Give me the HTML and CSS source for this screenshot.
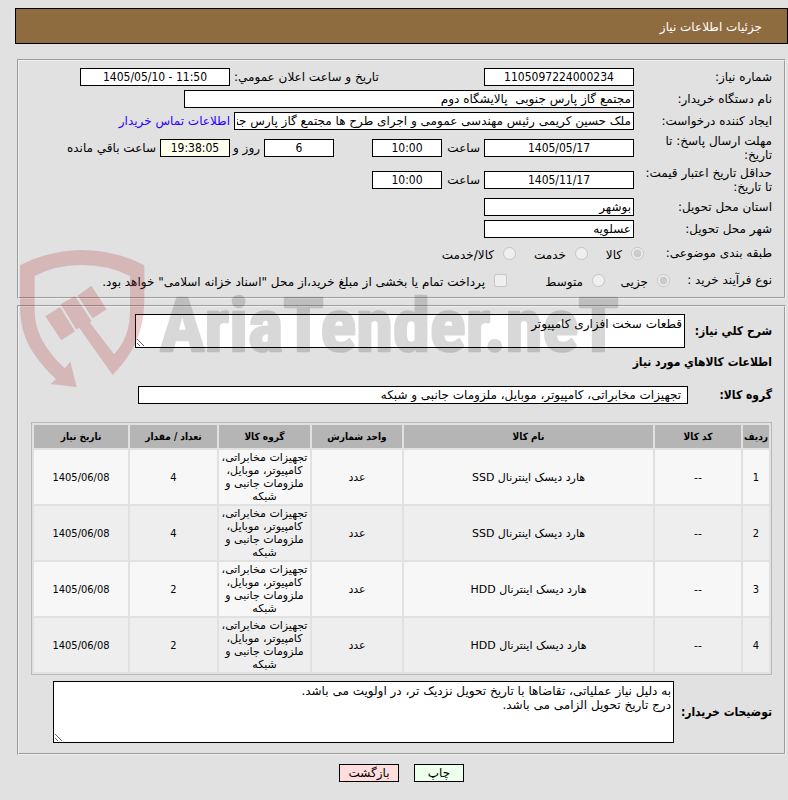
FILE: index.html
```html
<!DOCTYPE html>
<html lang="fa" dir="rtl">
<head>
<meta charset="utf-8">
<meta name="viewport" content="width=device-width, initial-scale=1">
<title>جزئیات اطلاعات نیاز</title>
<link rel="stylesheet" href="styles.css">
</head>
<body>
<main class="page">
  <h1 class="title">جزئیات اطلاعات نیاز</h1>
  <form class="sheet">
    <fieldset class="panel">
      <div class="row">
        <label class="label" for="number">شماره نیاز:</label>
        <input class="box date center" id="number" value="1105097224000234" readonly>
        <label class="announce" for="announce">تاریخ و ساعت اعلان عمومي:</label>
        <input class="box date center" id="announce" dir="ltr" value="1405/05/10 - 11:50" readonly>
      </div>
      <div class="row">
        <label class="label" for="buyer">نام دستگاه خریدار:</label>
        <input class="box wide" id="buyer" value="مجتمع گاز پارس جنوبی &nbsp;پالایشگاه دوم" readonly>
      </div>
      <div class="row">
        <label class="label" for="creator">ایجاد کننده درخواست:</label>
        <input class="box creator" id="creator" value="ملک حسین کریمی رئیس مهندسی عمومی و اجرای طرح ها مجتمع گاز پارس جنوبی" readonly>
        <a class="link" href="#contact">اطلاعات تماس خریدار</a>
      </div>
      <div class="row tall">
        <label class="label" for="deadline">مهلت ارسال پاسخ: تا تاریخ:</label>
        <input class="box date center" id="deadline" value="1405/05/17" readonly>
        <label class="hour" for="deadline-hour">ساعت</label>
        <input class="box short center" id="deadline-hour" value="10:00" readonly>
        <input class="box short center days" id="days" aria-label="روز" value="6" readonly>
        <label class="and" for="days">روز و</label>
        <input class="box short center tint" id="left" value="19:38:05" readonly>
        <label for="left">ساعت باقي مانده</label>
      </div>
      <div class="row tall">
        <label class="label" for="validity">حداقل تاریخ اعتبار قیمت: تا تاریخ:</label>
        <input class="box date center" id="validity" value="1405/11/17" readonly>
        <label class="hour" for="validity-hour">ساعت</label>
        <input class="box short center" id="validity-hour" value="10:00" readonly>
      </div>
      <div class="row">
        <label class="label" for="province">استان محل تحویل:</label>
        <input class="box date" id="province" value="بوشهر" readonly>
      </div>
      <div class="row">
        <label class="label" for="city">شهر محل تحویل:</label>
        <input class="box date" id="city" value="عسلویه" readonly>
      </div>
      <div class="row options" role="radiogroup" aria-label="طبقه بندی موضوعی">
        <span class="label subject">طبقه بندی موضوعی:</span>
        <label class="option goods"><input type="radio" name="subject" checked disabled><span>کالا</span></label>
        <label class="option service"><input type="radio" name="subject" disabled><span>خدمت</span></label>
        <label class="option"><input type="radio" name="subject" disabled><span>کالا/خدمت</span></label>
      </div>
      <div class="row options last" role="radiogroup" aria-label="نوع فرآیند خرید">
        <span class="label process">نوع فرآیند خرید :</span>
        <label class="option minor"><input type="radio" name="process" checked disabled><span>جزیی</span></label>
        <label class="option medium"><input type="radio" name="process" disabled><span>متوسط</span></label>
        <label class="option"><input type="checkbox" disabled><span>پرداخت تمام یا بخشی از مبلغ خرید،از محل "اسناد خزانه اسلامی" خواهد بود.</span></label>
      </div>
    </fieldset>

    <fieldset class="panel">
      <div class="field">
        <label class="strong summary-label" for="summary">شرح كلي نياز:</label>
        <textarea class="area summary" id="summary" readonly>قطعات سخت افزاری کامپیوتر</textarea>
      </div>
      <h2 class="heading">اطلاعات کالاهاي مورد نياز</h2>
      <div class="field group">
        <label class="strong group-label" for="group">گروه کالا:</label>
        <input class="box group-box" id="group" value="تجهیزات مخابراتی، کامپیوتر، موبایل، ملزومات جانبی و شبکه" readonly>
      </div>
      <table class="items">
        <colgroup>
          <col class="c-row"><col class="c-code"><col class="c-name"><col class="c-unit"><col class="c-group"><col class="c-count"><col class="c-date">
        </colgroup>
        <thead>
          <tr><th>ردیف</th><th>کد کالا</th><th>نام کالا</th><th>واحد شمارش</th><th>گروه کالا</th><th>تعداد / مقدار</th><th>تاریخ نیاز</th></tr>
        </thead>
        <tbody>
          <tr><td class="num">1</td><td>--</td><td>هارد دیسک اینترنال SSD</td><td>عدد</td><td>تجهیزات مخابراتی، کامپیوتر، موبایل، ملزومات جانبی و شبکه</td><td class="num">4</td><td class="num">1405/06/08</td></tr>
          <tr><td class="num">2</td><td>--</td><td>هارد دیسک اینترنال SSD</td><td>عدد</td><td>تجهیزات مخابراتی، کامپیوتر، موبایل، ملزومات جانبی و شبکه</td><td class="num">4</td><td class="num">1405/06/08</td></tr>
          <tr><td class="num">3</td><td>--</td><td>هارد دیسک اینترنال HDD</td><td>عدد</td><td>تجهیزات مخابراتی، کامپیوتر، موبایل، ملزومات جانبی و شبکه</td><td class="num">2</td><td class="num">1405/06/08</td></tr>
          <tr><td class="num">4</td><td>--</td><td>هارد دیسک اینترنال HDD</td><td>عدد</td><td>تجهیزات مخابراتی، کامپیوتر، موبایل، ملزومات جانبی و شبکه</td><td class="num">2</td><td class="num">1405/06/08</td></tr>
        </tbody>
      </table>
      <div class="field comments">
        <label class="strong notes-label" for="notes">توضیحات خریدار:</label>
        <textarea class="area notes" id="notes" readonly>به دلیل نیاز عملیاتی، تقاضاها با تاریخ تحویل نزدیک تر، در اولویت می باشد.
درج تاریخ تحویل الزامی می باشد.</textarea>
      </div>
    </fieldset>

    <svg class="watermark" viewBox="60 180 1800 420" aria-hidden="true">
      <g class="shield">
        <path d="M60 226Q150 180 245 180Q345 180 433 226V325C433 425 400 492 338 555L238 414L228 418L182 343L225 318L274 392L270 398L342 493C375 458 390 415 390 360V258Q325 225 245 225Q165 225 104 258V360C104 430 140 482 194 535L211 515L230 591L152 582L168 568C90 490 60 440 60 340Z"/>
        <path d="M136 379L180 351L225 424L184 451ZM233 317L274 287L320 358L278 385Z"/>
      </g>
      <text class="brand" x="480" y="484" direction="ltr">AriaTender.neT</text>
    </svg>

    <div class="actions">
      <button class="button print" type="button">چاپ</button>
      <button class="button back" type="button">بازگشت</button>
    </div>
  </form>
</main>
</body>
</html>
```
FILE: styles.css
```css
* { box-sizing: border-box; }

body {
  margin: 0;
  background: #e1e1e1;
  color: #000;
  font: 12px/14px "DejaVu Sans", sans-serif;
}

.page { padding: 8px 0 16px 15px; }

.title {
  margin: 0 0 15px;
  padding: 11px 25px 9px;
  border: 1px solid #000;
  background: #8f6c40;
  color: #fff;
  font-size: 12px;
  font-weight: normal;
  line-height: 14px;
}

.sheet { position: relative; }

.panel {
  min-width: 0;
  margin: 0 2px 6px;
  padding: 5px 12px 3px;
  border: 2px groove #f0f0f0;
}

.row {
  display: flex;
  align-items: center;
  gap: 4px;
  height: 22px;
  white-space: nowrap;
}
.tall { height: 32px; }
.tall .label { white-space: normal; }
.options { height: 26px; gap: 0; }
.last { height: 28px; }

.label { flex: none; width: 134px; }
.announce { width: 246px; text-align: left; }
.hour { width: 34px; }
.and { width: 26px; }

.box, .area, .button {
  margin: 0;
  border: 1px solid #000;
  background: #fff;
  color: #000;
  font: inherit;
}
.box { height: 18px; padding: 0 2px; flex: none; }
.date { width: 150px; }
.short { width: 70px; }
.wide { width: 450px; }
.creator { width: 400px; }
.center, .num, .strong, .heading, .items th { font-family: "DejaVu Sans Condensed", "DejaVu Sans", sans-serif; }
.center { text-align: center; }
.box.tint { background: #ffffee; }
.days { margin-right: 34px; }
.link { color: #2a00ff; text-decoration: none; }

.subject { width: 128px; }
.process { width: 102px; }
.option { display: flex; align-items: center; gap: 9px; flex: none; }
.option input { margin: 0; width: 13px; height: 13px; }
.option span { padding-top: 4px; }
.goods { width: 56px; }
.service { width: 72px; }
.minor { width: 65px; }
.medium { width: 98px; }

.field { display: flex; align-items: center; gap: 4px; padding-top: 2px; }
.strong { flex: none; font-weight: bold; }
.area { display: block; padding: 2px; line-height: 14px; resize: both; overflow: hidden; }
.summary-label { width: 83px; }
.summary { width: 550px; height: 34px; }
.notes-label { width: 94px; }
.notes { width: 621px; height: 62px; }
.comments { margin-bottom: 7px; }

.heading { margin: 7px 0 17px; font-size: 12px; line-height: 14px; }
.group { padding: 0 0 18px; }
.group-label { width: 80px; }
.group-box { width: 550px; padding: 0 6px; }

.items {
  width: 100%;
  margin-bottom: 4px;
  border: 1px solid #b8b8b8;
  border-spacing: 2px;
  table-layout: fixed;
  font-size: 11px;
  line-height: 13px;
  text-align: center;
}
.items th { height: 23px; padding: 0; background: #b5b5b5; font-size: 10px; }
.items td { height: 54px; padding: 1px; background: #f7f7f7; }
.items tr:nth-child(even) td { background: #eee; }
.c-row { width: 26px; }
.c-code { width: 86px; }
.c-unit { width: 90px; }
.c-group { width: 91px; }
.c-count { width: 87px; }
.c-date { width: 94px; }

.actions { display: flex; justify-content: center; gap: 15px; padding-top: 3px; }
.button { height: 18px; padding: 0; }
.print { width: 50px; background: #edffed; }
.back { width: 60px; background: #ffdddd; }

.watermark {
  position: absolute;
  top: 191px;
  left: 5px;
  width: 600px;
  height: 140px;
  pointer-events: none;
}
.shield { fill: #b2262c; opacity: .22; }
.brand {
  fill: #000;
  stroke: #000;
  stroke-width: 8;
  stroke-linejoin: round;
  opacity: .15;
  font: bold 224px "Liberation Sans Narrow", "Roboto Condensed", "DejaVu Sans Condensed", sans-serif;
}
```
